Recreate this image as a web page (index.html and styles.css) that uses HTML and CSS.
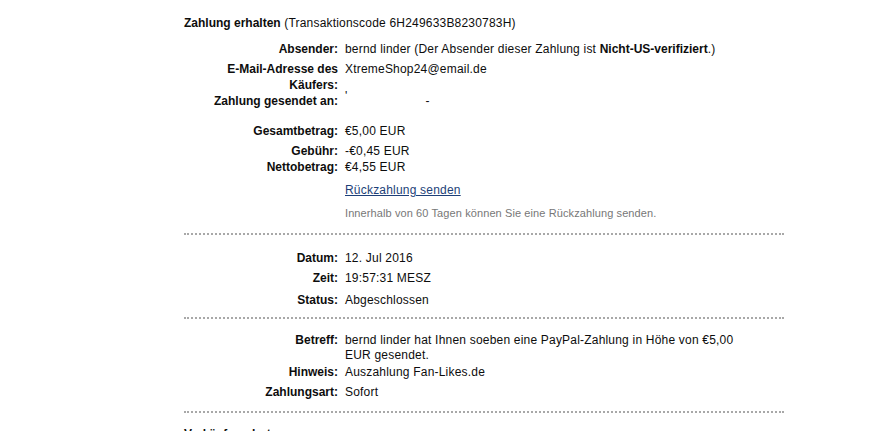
FILE: index.html
```html
<!DOCTYPE html>
<html lang="de">
<head>
<meta charset="utf-8">
<title>Zahlung erhalten</title>
<link rel="stylesheet" href="styles.css">
</head>
<body>
<div class="page">
  <h1 class="title"><b>Zahlung erhalten</b> (Transaktionscode 6H249633B8230783H)</h1>

  <div class="row r-absender"><div class="lbl">Absender:</div><div class="val">bernd linder (Der Absender dieser Zahlung ist <b>Nicht-US-verifiziert</b>.)</div></div>
  <div class="row r-email"><div class="lbl">E-Mail-Adresse des Käufers:</div><div class="val">XtremeShop24@email.de</div></div>
  <div class="row r-an"><div class="lbl">Zahlung gesendet an:</div><div class="val"><span class="tick">'</span><span class="redact"></span><span>-</span></div></div>

  <div class="row r-gesamt"><div class="lbl">Gesamtbetrag:</div><div class="val">€5,00 EUR</div></div>
  <div class="row r-gebuehr"><div class="lbl">Gebühr:</div><div class="val">-€0,45 EUR</div></div>
  <div class="row r-netto"><div class="lbl">Nettobetrag:</div><div class="val">€4,55 EUR</div></div>
  <div class="row r-link"><div class="lbl"></div><div class="val"><a href="#" class="link">Rückzahlung senden</a></div></div>
  <div class="row r-note"><div class="lbl"></div><div class="val note">Innerhalb von 60 Tagen können Sie eine Rückzahlung senden.</div></div>

  <hr class="sep sep1">

  <div class="row r-datum"><div class="lbl">Datum:</div><div class="val">12. Jul 2016</div></div>
  <div class="row r-zeit"><div class="lbl">Zeit:</div><div class="val">19:57:31 MESZ</div></div>
  <div class="row r-status"><div class="lbl">Status:</div><div class="val">Abgeschlossen</div></div>

  <hr class="sep sep2">

  <div class="row r-betreff"><div class="lbl">Betreff:</div><div class="val betreff">bernd linder hat Ihnen soeben eine PayPal-Zahlung in Höhe von €5,00 EUR gesendet.</div></div>
  <div class="row r-hinweis"><div class="lbl">Hinweis:</div><div class="val">Auszahlung Fan-Likes.de</div></div>
  <div class="row r-art"><div class="lbl">Zahlungsart:</div><div class="val">Sofort</div></div>

  <hr class="sep sep3">

  <h2 class="next">Verkäuferschutz</h2>
</div>
</body>
</html>
```

FILE: styles.css
```css
html, body {
  margin: 0;
  padding: 0;
  background: #ffffff;
}
body {
  font-family: "Liberation Sans", Arial, sans-serif;
  font-size: 12px;
  color: #0d0d0d;
  overflow: hidden;
}
.page {
  margin-left: 184px;
  width: 600px;
  padding-top: 15px;
}
.title {
  margin: 0;
  font-size: 12px;
  font-weight: normal;
  line-height: 16px;
  letter-spacing: 0.2px;
}
.title b {
  letter-spacing: 0;
}
.row {
  display: grid;
  grid-template-columns: 154px 1fr;
  column-gap: 7px;
  line-height: 16px;
}
.lbl {
  font-weight: bold;
  text-align: right;
}
.val {
  letter-spacing: 0.2px;
}
.val b {
  letter-spacing: 0;
}
.r-email .lbl {
  padding-left: 40px;
}
.tick {
  position: relative;
  top: -5px;
}
.redact {
  display: inline-block;
  width: 78px;
}
.link {
  color: #1d3f78;
  text-decoration: underline;
}
.note {
  font-size: 11px;
  color: #777777;
  letter-spacing: 0.1px;
}
.sep {
  margin: 0;
  border: 0;
  border-top: 2px dotted #a8a8a8;
  height: 0;
}
.betreff {
  line-height: 15px;
  padding-right: 50px;
}
.next {
  margin: 0;
  font-size: 12px;
  font-weight: bold;
  line-height: 16px;
}

/* vertical rhythm */
.r-absender { margin-top: 10px; }
.r-email { margin-top: 4px; }
.r-an { margin-top: 0; }
.r-gesamt { margin-top: 14px; }
.r-gebuehr { margin-top: 4px; }
.r-netto { margin-top: 0; }
.r-link { margin-top: 7px; }
.r-note { margin-top: 7px; }
.sep1 { margin-top: 12px; }
.r-datum { margin-top: 15px; }
.r-zeit { margin-top: 4px; }
.r-status { margin-top: 6px; }
.sep2 { margin-top: 9px; }
.r-betreff { margin-top: 14px; }
.r-betreff .lbl { line-height: 15px; }
.r-hinweis { margin-top: 1px; }
.r-art { margin-top: 4px; }
.sep3 { margin-top: 11px; }
.next { margin-top: 13px; }
```
